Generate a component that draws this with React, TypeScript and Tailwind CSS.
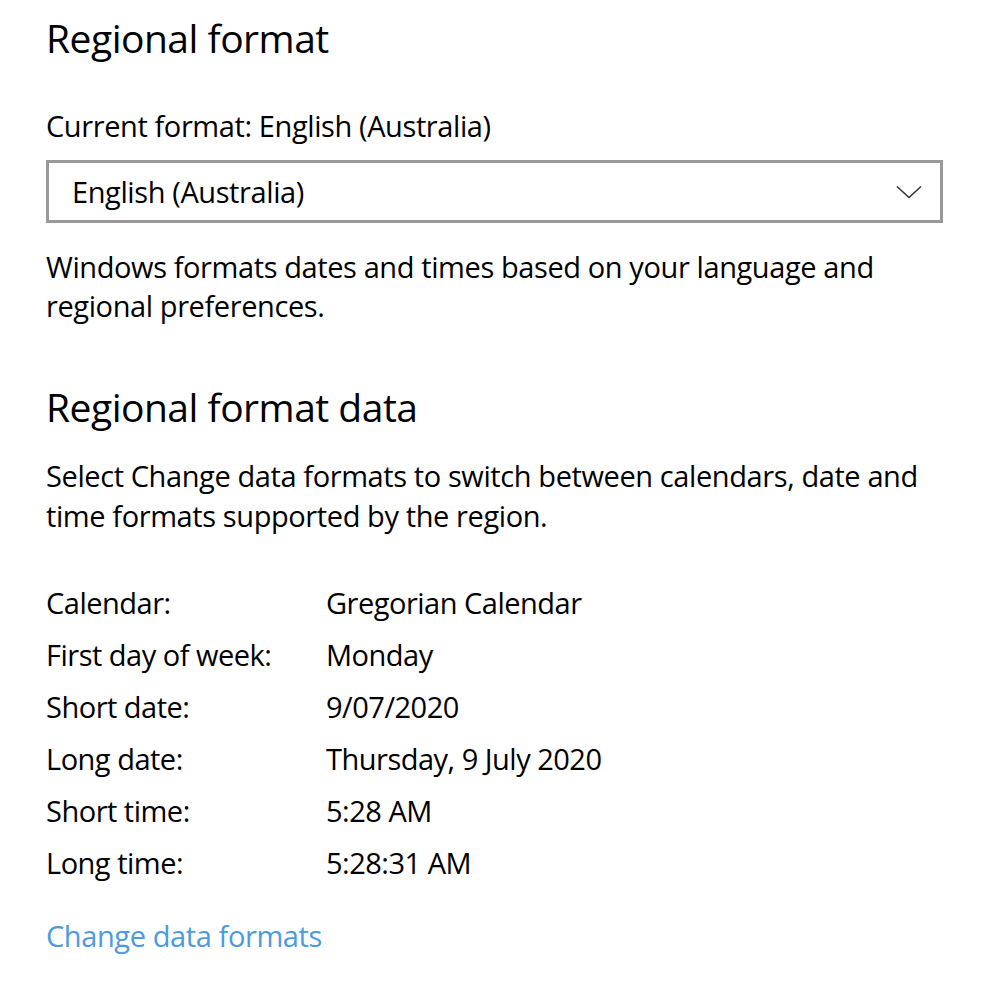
import React from "react";

const rows = [
  ["Calendar:", "Gregorian Calendar"],
  ["First day of week:", "Monday"],
  ["Short date:", "9/07/2020"],
  ["Long date:", "Thursday, 9 July 2020"],
  ["Short time:", "5:28 AM"],
  ["Long time:", "5:28:31 AM"],
];

const App = () => {
  return (
    <main
      className="min-h-screen bg-white pl-[46px] pr-[52px] pt-[14px] text-black"
      style={{ fontFamily: '"Open Sans", "Noto Sans", sans-serif' }}
    >
      <h1 className="text-[39px] leading-[48px] tracking-[-0.5px]">Regional format</h1>

      <p className="mt-[45px] text-[29px] leading-[38px] tracking-[-0.4px]">
        Current format: English (Australia)
      </p>

      <button
        type="button"
        className="mt-[15px] flex h-[63px] w-full items-center justify-between border-[3px] border-[#999999] pl-[23px] pr-[18px] text-left"
      >
        <span className="text-[29px] tracking-[-0.4px]">English (Australia)</span>
        <svg width="26" height="14" viewBox="0 0 26 14" fill="none">
          <path d="M1 1.5 L13 12.5 L25 1.5" stroke="#333" strokeWidth="1.6" />
        </svg>
      </button>

      <p className="mt-[24px] text-[29px] leading-[39px] tracking-[-0.4px]">
        Windows formats dates and times based on your language and regional preferences.
      </p>

      <h2 className="mt-[58px] text-[39px] leading-[48px] tracking-[-0.5px]">
        Regional format data
      </h2>

      <p className="mt-[25px] text-[29px] leading-[40px] tracking-[-0.4px]">
        Select Change data formats to switch between calendars, date and time formats supported
        by the region.
      </p>

      <div className="mt-[41px] flex flex-col">
        {rows.map(([label, value]) => (
          <div key={label} className="flex h-[52px] items-center text-[29px] tracking-[-0.5px]">
            <span className="w-[280px]">{label}</span>
            <span>{value}</span>
          </div>
        ))}
      </div>

      <a
        href="#"
        className="mt-[28px] block text-[29px] leading-[38px] tracking-[-0.4px] text-[#4c9be0]"
      >
        Change data formats
      </a>
    </main>
  );
};

export default App;
